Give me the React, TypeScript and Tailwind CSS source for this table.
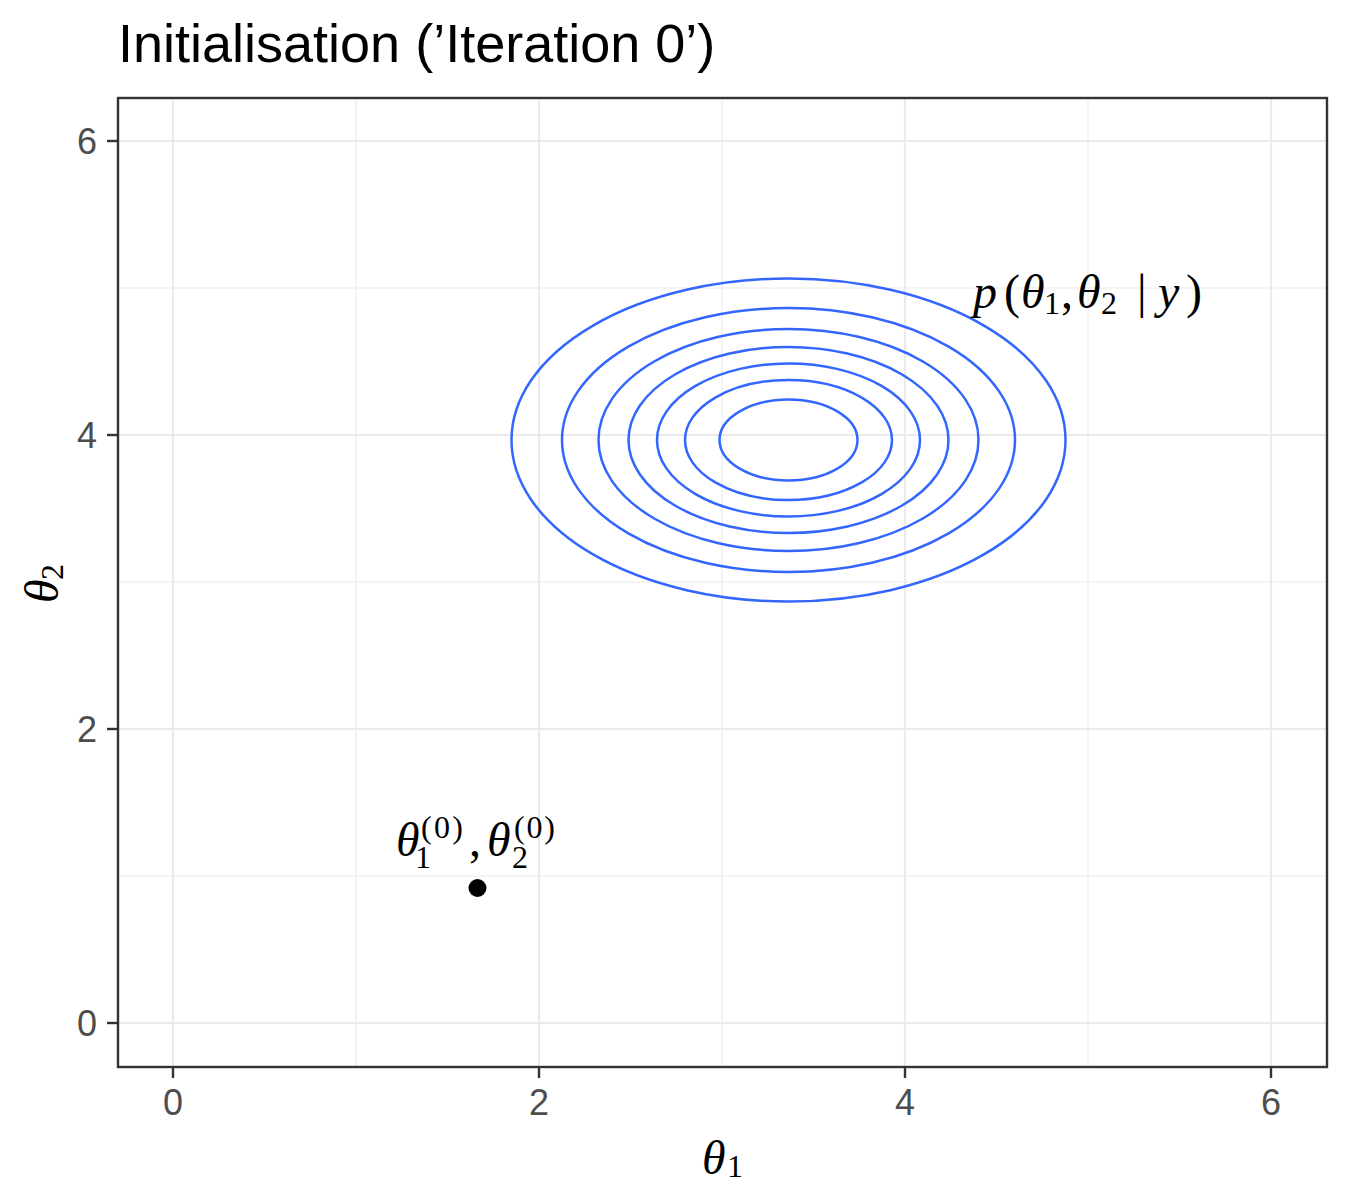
import React from "react";

const X = (v: number) => 173 + 183 * v;
const Y = (v: number) => 1023 - 147 * v;

const PL = 118;
const PR = 1327;
const PT = 98;
const PB = 1067;

const ELLIPSES: [number, number][] = [
  [69, 40.5],
  [103.5, 60],
  [131.5, 76.5],
  [160, 93],
  [190, 111],
  [226.5, 132],
  [277, 161.5],
];

const MATH = "'Liberation Serif', 'DejaVu Serif', serif";
const SANS = "'Liberation Sans', Arial, sans-serif";

function G({ x, y, s, it, children, len }: { x: number; y: number; s: number; it?: boolean; children: React.ReactNode; len?: number }) {
  return (
    <text
      x={x}
      y={y}
      fontSize={s}
      fontFamily={MATH}
      fontStyle={it ? "italic" : "normal"}
      fill="#000"
      {...(len ? { textLength: len, lengthAdjust: "spacing" } : {})}
    >
      {children}
    </text>
  );
}

export default function App() {
  const majors = [0, 2, 4, 6];
  const minors = [1, 3, 5];
  return (
    <div className="w-[1350px] h-[1200px] bg-white flex flex-col">
      <div className="h-[90px] pl-[118px] pt-[16px] text-[54px] leading-none text-black font-['Liberation_Sans',Arial,sans-serif]">
        Initialisation (’Iteration 0’)
      </div>
      <svg width={1350} height={1110} viewBox="0 90 1350 1110" className="block">
        <rect x={PL} y={PT} width={PR - PL} height={PB - PT} fill="#fff" />
        {minors.map((v) => (
          <g key={"mi" + v}>
            <line x1={X(v)} x2={X(v)} y1={PT} y2={PB} stroke="#EBEBEB" strokeWidth={1.1} />
            <line x1={PL} x2={PR} y1={Y(v)} y2={Y(v)} stroke="#EBEBEB" strokeWidth={1.1} />
          </g>
        ))}
        {majors.map((v) => (
          <g key={"ma" + v}>
            <line x1={X(v)} x2={X(v)} y1={PT} y2={PB} stroke="#EBEBEB" strokeWidth={2.2} />
            <line x1={PL} x2={PR} y1={Y(v)} y2={Y(v)} stroke="#EBEBEB" strokeWidth={2.2} />
          </g>
        ))}
        {ELLIPSES.map(([rx, ry], i) => (
          <ellipse key={i} cx={788.5} cy={440} rx={rx} ry={ry} fill="none" stroke="#3366FF" strokeWidth={2.5} />
        ))}
        <circle cx={477.5} cy={888} r={9} fill="#000" />

        {/* p(θ1, θ2 | y) */}
        <G x={973} y={308} s={48} it>p</G>
        <G x={1004} y={308} s={48}>(</G>
        <G x={1021} y={308} s={48} it>θ</G>
        <G x={1044} y={314} s={32}>1</G>
        <G x={1061} y={308} s={48}>,</G>
        <G x={1077} y={308} s={48} it>θ</G>
        <G x={1101} y={314} s={32}>2</G>
        <G x={1137} y={308} s={48}>|</G>
        <G x={1158} y={308} s={48} it>y</G>
        <G x={1186} y={308} s={48}>)</G>

        {/* θ1(0), θ2(0) */}
        <G x={396} y={856} s={48} it>θ</G>
        <G x={421} y={838} s={32} len={42}>(0)</G>
        <G x={415} y={868} s={32}>1</G>
        <G x={469} y={856} s={48}>,</G>
        <G x={487} y={856} s={48} it>θ</G>
        <G x={514} y={838} s={32} len={41}>(0)</G>
        <G x={512} y={868} s={32}>2</G>

        {/* panel border */}
        <rect x={PL} y={PT} width={PR - PL} height={PB - PT} fill="none" stroke="#333333" strokeWidth={2.4} />

        {/* ticks */}
        {majors.map((v) => (
          <g key={"t" + v}>
            <line x1={107} x2={PL} y1={Y(v)} y2={Y(v)} stroke="#333333" strokeWidth={2.4} />
            <line x1={X(v)} x2={X(v)} y1={PB} y2={PB + 11} stroke="#333333" strokeWidth={2.4} />
            <text x={97} y={Y(v) + 13} fontSize={36} fontFamily={SANS} fill="#4D4D4D" textAnchor="end">
              {v}
            </text>
            <text x={X(v)} y={1115} fontSize={36} fontFamily={SANS} fill="#4D4D4D" textAnchor="middle">
              {v}
            </text>
          </g>
        ))}

        {/* x axis title */}
        <G x={702} y={1174} s={48} it>θ</G>
        <G x={727} y={1177} s={32}>1</G>

        {/* y axis title */}
        <g transform="translate(58 603) rotate(-90)">
          <G x={0} y={0} s={48} it>θ</G>
          <G x={23} y={5} s={32}>2</G>
        </g>
      </svg>
    </div>
  );
}
